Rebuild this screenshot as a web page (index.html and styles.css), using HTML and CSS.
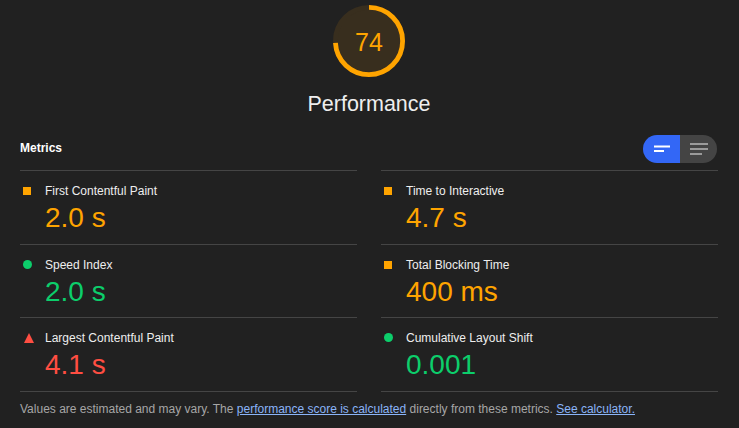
FILE: index.html
```html
<!DOCTYPE html>
<html lang="en">
<head>
<meta charset="utf-8">
<title>Performance</title>
<link rel="stylesheet" href="styles.css">
</head>
<body>
<div class="report">
  <section class="gauge-wrap">
    <div class="gauge">
      <svg class="gauge-svg" viewBox="0 0 120 120" width="72" height="72">
        <circle class="gauge-base" cx="60" cy="60" r="56"></circle>
        <circle class="gauge-arc" cx="60" cy="60" r="56" transform="rotate(-90 60 60)" stroke-dasharray="260.4 351.9"></circle>
      </svg>
      <span class="gauge-score">74</span>
    </div>
    <div class="gauge-label">Performance</div>
  </section>

  <div class="metrics-header">
    <span class="metrics-title">Metrics</span>
    <div class="toggle">
      <span class="toggle-btn toggle-btn--active">
        <svg width="16" height="8" viewBox="0 0 16 8"><rect x="0" y="0.5" width="16" height="2" fill="#fff"/><rect x="0" y="5" width="10" height="2" fill="#fff"/></svg>
      </span>
      <span class="toggle-btn">
        <svg width="18" height="12" viewBox="0 0 18 12"><rect x="0" y="0" width="18" height="2" fill="#9a9a9a"/><rect x="0" y="5" width="18" height="2" fill="#9a9a9a"/><rect x="0" y="10" width="12" height="2" fill="#9a9a9a"/></svg>
      </span>
    </div>
  </div>

  <div class="metrics">
    <div class="metric">
      <span class="icon icon--square"></span>
      <div class="metric-body">
        <div class="metric-label">First Contentful Paint</div>
        <div class="metric-value avg">2.0&nbsp;s</div>
      </div>
    </div>
    <div class="metric">
      <span class="icon icon--square"></span>
      <div class="metric-body">
        <div class="metric-label">Time to Interactive</div>
        <div class="metric-value avg">4.7&nbsp;s</div>
      </div>
    </div>
    <div class="metric">
      <span class="icon icon--circle"></span>
      <div class="metric-body">
        <div class="metric-label">Speed Index</div>
        <div class="metric-value pass">2.0&nbsp;s</div>
      </div>
    </div>
    <div class="metric">
      <span class="icon icon--square"></span>
      <div class="metric-body">
        <div class="metric-label">Total Blocking Time</div>
        <div class="metric-value avg">400&nbsp;ms</div>
      </div>
    </div>
    <div class="metric metric--last">
      <span class="icon icon--triangle"></span>
      <div class="metric-body">
        <div class="metric-label">Largest Contentful Paint</div>
        <div class="metric-value fail">4.1&nbsp;s</div>
      </div>
    </div>
    <div class="metric metric--last">
      <span class="icon icon--circle"></span>
      <div class="metric-body">
        <div class="metric-label">Cumulative Layout Shift</div>
        <div class="metric-value pass">0.001</div>
      </div>
    </div>
  </div>

  <p class="footnote">Values are estimated and may vary. The <a href="#" class="link">performance score is calculated</a> directly from these metrics. <a href="#" class="link">See calculator.</a></p>
</div>
</body>
</html>
```

FILE: styles.css
```css
html, body {
  margin: 0;
  padding: 0;
  background: #212121;
}

body {
  font-family: "Liberation Sans", Arial, sans-serif;
  color: #eeeeee;
}

.report {
  padding: 5px 21px 0 20px;
}

.gauge-wrap {
  display: flex;
  flex-direction: column;
  align-items: center;
}

.gauge {
  display: grid;
  width: 72px;
  height: 72px;
}

.gauge-svg,
.gauge-score {
  grid-area: 1 / 1;
}

.gauge-base {
  fill: #382e1e;
  stroke: #382e1e;
  stroke-width: 8;
}

.gauge-arc {
  fill: none;
  stroke: #ffa400;
  stroke-width: 8;
}

.gauge-score {
  display: flex;
  align-items: center;
  justify-content: center;
  padding-top: 3px;
  font-size: 25px;
  line-height: 1;
  color: #ffa400;
}

.gauge-label {
  margin-top: 15px;
  font-size: 21.5px;
  line-height: 24px;
  color: #eeeeee;
}

.metrics-header {
  margin-top: 19px;
  display: flex;
  align-items: center;
  justify-content: space-between;
  height: 28px;
}

.metrics-title {
  font-size: 12px;
  font-weight: bold;
  line-height: 16px;
  color: #ffffff;
  padding-bottom: 2px;
}

.toggle {
  display: flex;
  width: 74px;
  height: 28px;
  border-radius: 14px;
  overflow: hidden;
  margin-right: 1px;
}

.toggle-btn {
  flex: 1;
  display: flex;
  align-items: center;
  justify-content: center;
  background: #444444;
}

.toggle-btn--active {
  background: #3367f6;
}

.toggle-btn svg {
  display: block;
}

.metrics {
  margin-top: 7px;
  display: grid;
  grid-template-columns: 1fr 1fr;
  column-gap: 24px;
}

.metric {
  box-sizing: border-box;
  height: 73.7px;
  border-top: 1px solid #454545;
  display: grid;
  grid-template-columns: 25px 1fr;
  padding-top: 11px;
}

.metric--last {
  border-bottom: 1px solid #454545;
  height: 74.7px;
}

.icon {
  display: block;
  margin-left: 3px;
}

.icon--square {
  width: 8px;
  height: 8px;
  margin-top: 5px;
  background: #ffa400;
}

.icon--circle {
  width: 9px;
  height: 9px;
  margin-top: 4px;
  border-radius: 50%;
  background: #0cce6b;
}

.icon--triangle {
  width: 0;
  height: 0;
  margin-top: 4px;
  margin-left: 4px;
  border-left: 5px solid transparent;
  border-right: 5px solid transparent;
  border-bottom: 10px solid #ff4e42;
}

.metric-label {
  font-size: 12px;
  line-height: 18px;
  color: #eeeeee;
}

.metric-value {
  margin-top: 2px;
  font-size: 28px;
  line-height: 32px;
}

.avg { color: #ffa400; }
.pass { color: #0cce6b; }
.fail { color: #ff4e42; }

.footnote {
  margin: 8px 0 0;
  font-size: 12px;
  line-height: 18px;
  color: #a6a6a6;
}

.link {
  color: #8ab4f8;
  text-decoration: underline;
}
```
